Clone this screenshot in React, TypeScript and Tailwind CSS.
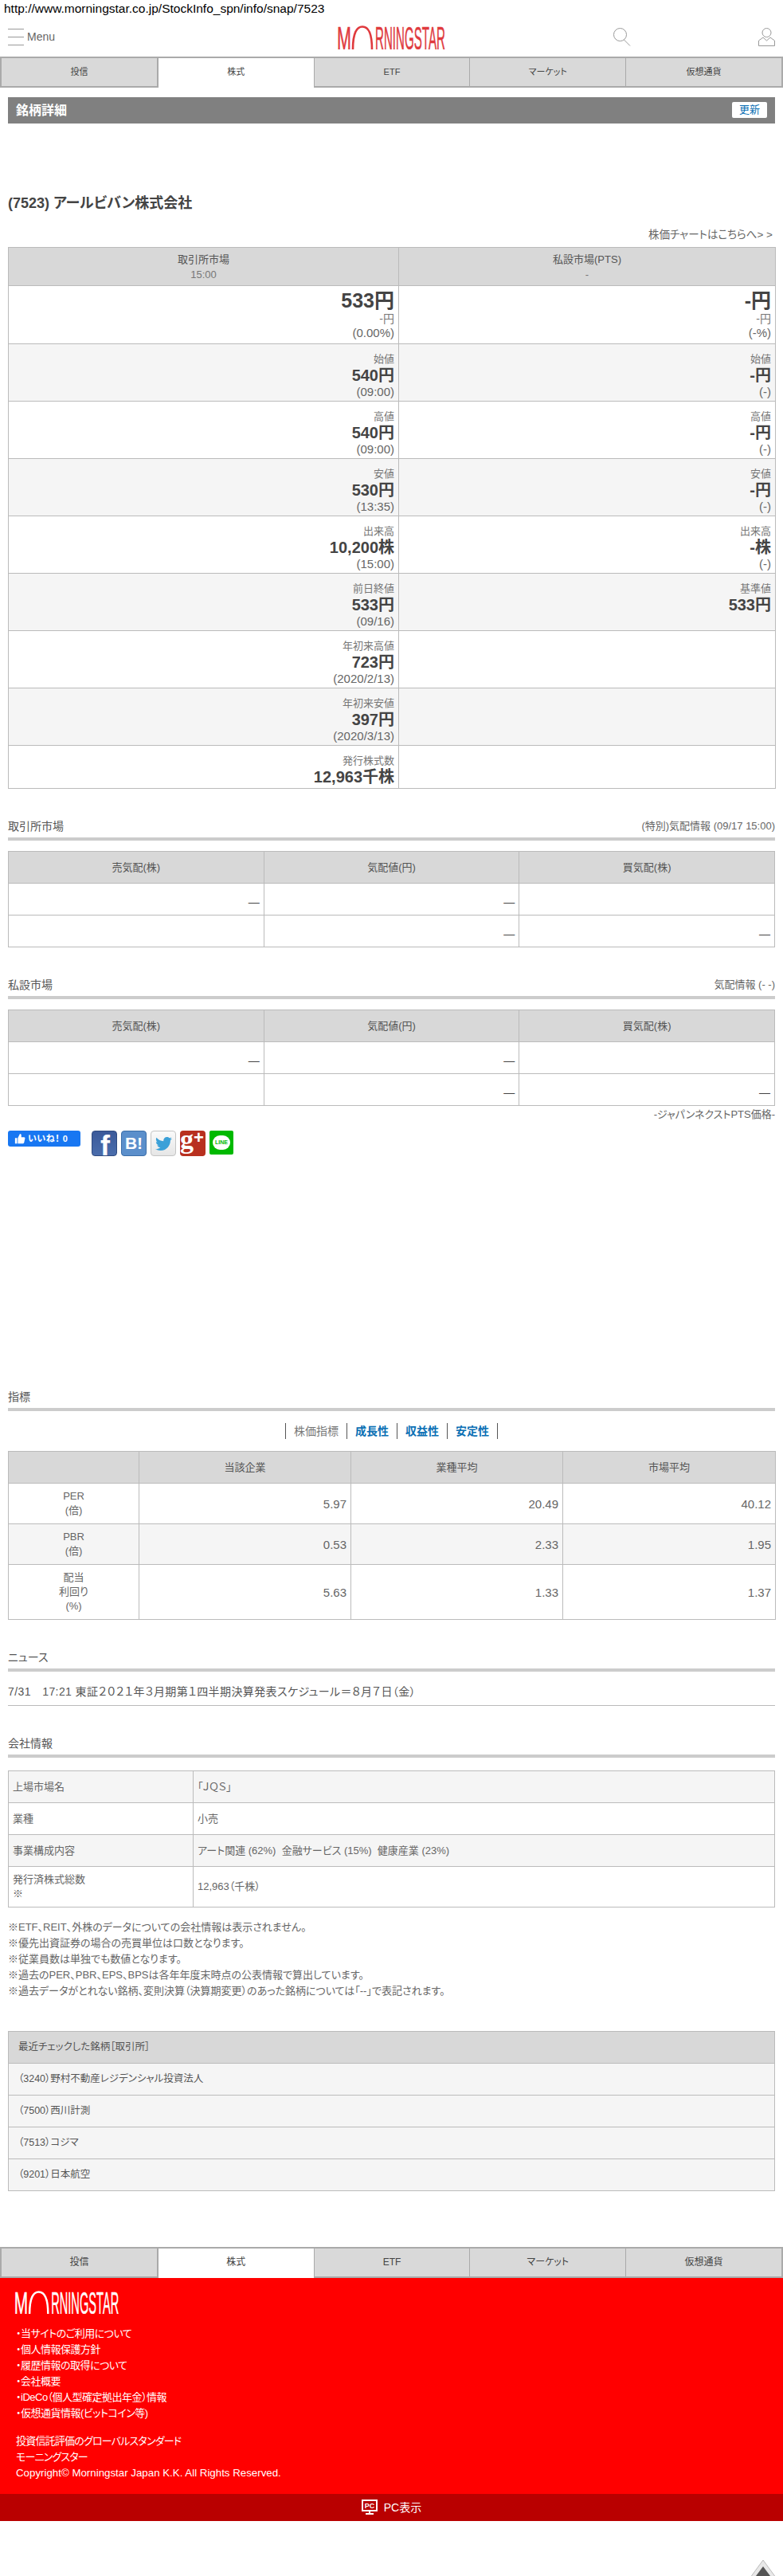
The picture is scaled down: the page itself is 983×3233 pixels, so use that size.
import { FaTwitter } from "react-icons/fa";

const tabs = ["投信", "株式", "ETF", "マーケット", "仮想通貨"];

const quoteRows = [
  { bg: "bg-[#f5f5f5]", left: ["始値", "540円", "(09:00)"], right: ["始値", "-円", "(-)"] },
  { bg: "bg-white", left: ["高値", "540円", "(09:00)"], right: ["高値", "-円", "(-)"] },
  { bg: "bg-[#f5f5f5]", left: ["安値", "530円", "(13:35)"], right: ["安値", "-円", "(-)"] },
  { bg: "bg-white", left: ["出来高", "10,200株", "(15:00)"], right: ["出来高", "-株", "(-)"] },
  { bg: "bg-[#f5f5f5]", left: ["前日終値", "533円", "(09/16)"], right: ["基準値", "533円"] },
  { bg: "bg-white", left: ["年初来高値", "723円", "(2020/2/13)"], right: [] },
  { bg: "bg-[#f5f5f5]", left: ["年初来安値", "397円", "(2020/3/13)"], right: [] },
];

const metrics = [
  { bg: "bg-white", h: "h-[51px]", label: ["PER", "(倍)"], values: ["5.97", "20.49", "40.12"] },
  { bg: "bg-[#f5f5f5]", h: "h-[51px]", label: ["PBR", "(倍)"], values: ["0.53", "2.33", "1.95"] },
  { bg: "bg-white", h: "h-[69px]", label: ["配当", "利回り", "(%)"], values: ["5.63", "1.33", "1.37"] },
];

const company = [
  { bg: "bg-[#f5f5f5]", h: "h-[40px]", label: ["上場市場名"], value: "「ＪＱＳ」" },
  { bg: "bg-white", h: "h-[40px]", label: ["業種"], value: "小売" },
  { bg: "bg-[#f5f5f5]", h: "h-[40px]", label: ["事業構成内容"], value: "アート関連 (62%)  金融サービス (15%)  健康産業 (23%)" },
  { bg: "bg-white", h: "h-[51px]", label: ["発行済株式総数", "※"], value: "12,963（千株）" },
];

const notes = [
  "※ETF、REIT、外株のデータについての会社情報は表示されません。",
  "※優先出資証券の場合の売買単位は口数となります。",
  "※従業員数は単独でも数値となります。",
  "※過去のPER、PBR、EPS、BPSは各年年度末時点の公表情報で算出しています。",
  "※過去データがとれない銘柄、変則決算（決算期変更）のあった銘柄については「--」で表記されます。",
];

const recent = ["（3240）野村不動産レジデンシャル投資法人", "（7500）西川計測", "（7513）コジマ", "（9201）日本航空"];

const footerLinks = [
  "・当サイトのご利用について",
  "・個人情報保護方針",
  "・履歴情報の取得について",
  "・会社概要",
  "・iDeCo（個人型確定拠出年金）情報",
  "・仮想通貨情報(ビットコイン等)",
];

function Logo({ color, className }: { color: string; className: string }) {
  return (
    <svg viewBox="0 0 136 30" className={className} fill={color} stroke={color} strokeWidth="0.5">
      <text x="0" y="29.5" fontSize="41" textLength="18" lengthAdjust="spacingAndGlyphs" fontFamily="Liberation Sans">
        M
      </text>
      <path d="M20 30C20 9 25 1.5 32 1.5S44 9 44 30" fill="none" stroke={color} strokeWidth="2.6" />
      <text x="48" y="29.5" fontSize="41" textLength="88" lengthAdjust="spacingAndGlyphs" fontFamily="Liberation Sans">
        RNINGSTAR
      </text>
    </svg>
  );
}

function TabBar({ textSize }: { textSize: string }) {
  return (
    <div className="flex h-[39px]">
      {tabs.map((tab, i) => (
        <div
          key={tab}
          className={`flex-1 flex justify-center pt-[8px] leading-[18px] text-[#444] border-t-2 border-[#aaa] ${textSize} ${
            i === 1
              ? "bg-white border-x border-x-[#aaa]"
              : "bg-[#d9d9d9] border-b-2 border-b-[#aaa] border-r border-r-[#aaa] first:border-l-2 last:border-r-2"
          }`}
        >
          {tab}
        </div>
      ))}
    </div>
  );
}

function SectionTitle({ title, note, className = "" }: { title: string; note?: string; className?: string }) {
  return (
    <div className={`mx-[10px] ${className}`}>
      <div className="flex justify-between items-center h-[20px] text-[14px] text-[#555]">
        <span>{title}</span>
        {note && <span className="text-[13px] text-[#666]">{note}</span>}
      </div>
      <div className="h-[4px] mt-[4px] bg-[#ccc]" />
    </div>
  );
}

function QuoteCell({ cell }: { cell: string[] }) {
  return (
    <td className="align-top text-right px-[5px] pt-[9px] border border-[#bbb]">
      {cell[0] && <div className="text-[13px] leading-[20px] text-[#777]">{cell[0]}</div>}
      {cell[1] && <div className="text-[20px] leading-[20px] font-bold text-[#444]">{cell[1]}</div>}
      {cell[2] && <div className="text-[15px] leading-[20px] mt-[1px] text-[#666]">{cell[2]}</div>}
    </td>
  );
}

function BoardTable() {
  const rows = [
    ["—", "—", ""],
    ["", "—", "—"],
  ];
  return (
    <table className="w-[963px] mx-[10px] table-fixed border-collapse text-[14px] text-[#444]">
      <thead>
        <tr className="h-[40px] bg-[#d8d8d8]">
          {["売気配(株)", "気配値(円)", "買気配(株)"].map((h) => (
            <th key={h} className="font-normal text-[13px] text-[#555] border border-[#bbb]">
              {h}
            </th>
          ))}
        </tr>
      </thead>
      <tbody>
        {rows.map((row, i) => (
          <tr key={i} className="h-[40px]">
            {row.map((c, j) => (
              <td key={j} className="text-right px-[5px] pt-[7px] border border-[#bbb]">
                {c}
              </td>
            ))}
          </tr>
        ))}
      </tbody>
    </table>
  );
}

function SocialIcons() {
  return (
    <div className="flex items-start mt-[10px] mx-[10px]">
      <div className="flex items-center gap-[3px] w-[91px] h-[20px] pl-[8px] rounded-[3px] bg-[#1877f2] text-white text-[11px] font-bold">
        <svg viewBox="0 0 16 16" className="w-[14px] h-[14px]" fill="white">
          <path d="M1 7h3v8H1zM5 7l3-6c1.500 0 2 1 2 2v3h4c1 0 1.500 1 1.300 1.800l-1.300 6c-.2.800-.7 1.200-1.500 1.200H5z" />
        </svg>
        <span className="tracking-[0.5px]">いいね！ 0</span>
      </div>
      <div className="flex gap-[5px] ml-[14px]">
        <div className="relative w-[32px] h-[32px] rounded-[4px] overflow-hidden border border-[#2f4a80] bg-gradient-to-b from-[#3b5a9a] to-[#4a6dac]">
          <span className="absolute left-[10px] top-[1px] text-white font-bold text-[36px] leading-[36px] [font-family:'Liberation_Sans']">
            f
          </span>
        </div>
        <div className="flex items-center justify-center w-[32px] h-[32px] rounded-[4px] border border-[#3b6ea8] bg-[#5b8fcb] text-white font-bold text-[21px] [font-family:'Liberation_Sans']">
          B!
        </div>
        <div className="flex items-center justify-center w-[32px] h-[32px] rounded-[4px] border border-[#c4c4c4] bg-gradient-to-b from-[#fafafa] to-[#e6e6e6]">
          <FaTwitter className="w-[21px] h-[21px] text-[#3aa0d8]" />
        </div>
        <div className="relative w-[32px] h-[32px] rounded-[4px] overflow-hidden bg-[#b8301f] text-white">
          <span className="absolute left-[0px] top-[-6px] text-[34px] leading-[34px] font-bold [font-family:'Liberation_Serif']">
            g
          </span>
          <span className="absolute left-[17px] top-[-3px] text-[22px] leading-[24px] font-bold [font-family:'Liberation_Sans']">
            +
          </span>
        </div>
        <div className="flex items-center justify-center w-[30px] h-[30px] rounded-[2px] bg-[#00b900]">
          <div className="flex items-center justify-center w-[22px] h-[18px] rounded-[10px] bg-white text-[#00b900] text-[7px] font-bold [font-family:'Liberation_Sans']">
            LINE
          </div>
        </div>
      </div>
    </div>
  );
}

export default function App() {
  return (
    <div className="w-[983px] h-[3233px] overflow-hidden bg-white text-[#555] [font-family:'Liberation_Sans','Noto_Sans_CJK_JP',sans-serif] [font-feature-settings:'palt']">
      <div className="h-[22px] pl-[5px] text-[15.5px] leading-[22px] text-black">
        http://www.morningstar.co.jp/StockInfo_spn/info/snap/7523
      </div>

      {/* header */}
      <div className="relative flex items-center justify-between h-[49px] px-[10px]">
        <div className="flex items-center gap-[4px]">
          <div className="flex flex-col gap-[9px] w-[20px]">
            <span className="h-px bg-[#999]" />
            <span className="h-px bg-[#999]" />
            <span className="h-px bg-[#999]" />
          </div>
          <span className="text-[14px] text-[#666]">Menu</span>
        </div>
        <Logo color="#e03a3e" className="absolute left-[423px] top-[10px] w-[136px] h-[30px]" />
        <div className="flex items-center gap-[160px]">
          <svg viewBox="0 0 22 23" className="w-[22px] h-[23px]" fill="none" stroke="#999" strokeWidth="1">
            <circle cx="8.500" cy="8.500" r="8" />
            <path d="M13.500 15L21 22.500" />
          </svg>
          <svg viewBox="0 0 21 23" className="w-[21px] h-[23px]" fill="none" stroke="#999" strokeWidth="1">
            <circle cx="10.500" cy="6" r="5.500" />
            <path d="M.5 22.500V16L6 12l4.500 4L15 12l5.500 4v6.500z" />
          </svg>
        </div>
      </div>

      <TabBar textSize="text-[11px]" />

      <div className="flex items-center justify-between h-[33px] mx-[10px] mt-[12px] pl-[10px] pr-[10px] bg-[#808080]">
        <span className="text-[16px] font-bold text-white">銘柄詳細</span>
        <span className="flex items-center justify-center w-[44px] h-[20px] rounded-[2px] bg-white text-[13px] text-[#0a6fb4] -mt-[1px]">
          更新
        </span>
      </div>

      <h1 className="mx-[10px] mt-[85px] text-[18px] leading-[30px] font-bold text-[#444]">(7523) アールビバン株式会社</h1>
      <div className="mt-[15px] mr-[13px] text-right text-[13.5px] leading-[20px] text-[#666]">株価チャートはこちらへ&gt; &gt;</div>

      <table className="w-[963px] mx-[10px] mt-[5px] table-fixed border-collapse">
        <colgroup>
          <col className="w-[490px]" />
          <col className="w-[473px]" />
        </colgroup>
        <thead>
          <tr className="h-[48px] bg-[#d8d8d8]">
            <th className="font-normal text-[13px] leading-[19px] text-[#555] border border-[#bbb]">
              取引所市場
              <div className="text-[#777]">15:00</div>
            </th>
            <th className="font-normal text-[13px] leading-[19px] text-[#555] border border-[#bbb]">
              私設市場(PTS)
              <div className="text-[#777]">-</div>
            </th>
          </tr>
        </thead>
        <tbody>
          <tr className="h-[73px]">
            {[
              ["533円", "-円", "(0.00%)"],
              ["-円", "-円", "(-%)"],
            ].map((c) => (
              <td key={c[2]} className="align-top text-right px-[5px] pt-[5px] border border-[#bbb]">
                <div className="text-[25px] leading-[27px] font-bold text-[#444]">{c[0]}</div>
                <div className="text-[14px] leading-[18px] text-[#777]">{c[1]}</div>
                <div className="text-[15px] leading-[18px] text-[#666]">{c[2]}</div>
              </td>
            ))}
          </tr>
          {quoteRows.map((row) => (
            <tr key={row.left[0]} className={`h-[72px] ${row.bg}`}>
              <QuoteCell cell={row.left} />
              <QuoteCell cell={row.right} />
            </tr>
          ))}
          <tr className="h-[54px]">
            <QuoteCell cell={["発行株式数", "12,963千株"]} />
            <QuoteCell cell={[]} />
          </tr>
        </tbody>
      </table>

      <SectionTitle title="取引所市場" note="(特別)気配情報 (09/17 15:00)" className="mt-[37px]" />
      <div className="mt-[13px]">
        <BoardTable />
      </div>

      <SectionTitle title="私設市場" note="気配情報 (- -)" className="mt-[37px]" />
      <div className="mt-[13px]">
        <BoardTable />
      </div>
      <div className="mt-[1px] mr-[10px] text-right text-[13px] leading-[20px] text-[#666]">-ジャパンネクストPTS価格-</div>

      <SocialIcons />

      <SectionTitle title="指標" className="mt-[292px]" />
      <div className="flex justify-center mt-[15px] h-[20px] text-[14px] leading-[20px]">
        <span className="px-[10px] border-l border-[#555] text-[#777]">株価指標</span>
        {["成長性", "収益性", "安定性"].map((t, i) => (
          <span key={t} className={`px-[10px] border-l border-[#555] font-bold text-[#0a6fb4] ${i === 2 ? "border-r" : ""}`}>
            {t}
          </span>
        ))}
      </div>

      <table className="w-[963px] mx-[10px] mt-[15px] table-fixed border-collapse text-[#666]">
        <colgroup>
          <col className="w-[164px]" />
          <col className="w-[266px]" />
          <col className="w-[266px]" />
          <col className="w-[267px]" />
        </colgroup>
        <thead>
          <tr className="h-[40px] bg-[#d8d8d8]">
            {["", "当該企業", "業種平均", "市場平均"].map((h) => (
              <th key={h} className="font-normal text-[13px] text-[#555] border border-[#bbb]">
                {h}
              </th>
            ))}
          </tr>
        </thead>
        <tbody>
          {metrics.map((m) => (
            <tr key={m.label[0]} className={`${m.h} ${m.bg}`}>
              <td className="text-center text-[13px] leading-[18px] border border-[#bbb]">
                {m.label.map((l) => (
                  <div key={l}>{l}</div>
                ))}
              </td>
              {m.values.map((v, i) => (
                <td key={i} className="text-right text-[15px] px-[5px] pt-[3px] border border-[#bbb]">
                  {v}
                </td>
              ))}
            </tr>
          ))}
        </tbody>
      </table>

      <SectionTitle title="ニュース" className="mt-[37px]" />
      <div className="mx-[10px] mt-[15px] pb-[7px] border-b border-[#bbb] text-[14px] leading-[20px] tracking-[0.4px] text-[#555]">
        7/31　17:21 東証２０２１年３月期第１四半期決算発表スケジュール＝８月７日（金）
      </div>

      <SectionTitle title="会社情報" className="mt-[37px]" />
      <table className="w-[963px] mx-[10px] mt-[16px] table-fixed border-collapse text-[13px] text-[#666]">
        <colgroup>
          <col className="w-[232px]" />
          <col />
        </colgroup>
        <tbody>
          {company.map((c) => (
            <tr key={c.label[0]} className={`${c.h} ${c.bg}`}>
              <td className="px-[5px] leading-[18px] border border-[#bbb]">
                {c.label.map((l) => (
                  <div key={l}>{l}</div>
                ))}
              </td>
              <td className="px-[5px] whitespace-pre border border-[#bbb]">{c.value}</td>
            </tr>
          ))}
        </tbody>
      </table>

      <div className="mx-[10px] mt-[15px] text-[13px] leading-[20px] text-[#666]">
        {notes.map((n) => (
          <div key={n}>{n}</div>
        ))}
      </div>

      <table className="w-[963px] mx-[10px] mt-[40px] border-collapse text-[12.5px] text-[#555]">
        <tbody>
          <tr className="h-[40px] bg-[#d8d8d8]">
            <td className="px-[12px] border border-[#bbb]">最近チェックした銘柄［取引所］</td>
          </tr>
          {recent.map((r) => (
            <tr key={r} className="h-[40px] bg-[#f5f5f5]">
              <td className="px-[12px] border border-[#bbb]">{r}</td>
            </tr>
          ))}
        </tbody>
      </table>

      <div className="mt-[70px]">
        <TabBar textSize="text-[12px]" />
      </div>

      {/* footer */}
      <div className="h-[271px] pt-[16px] pl-[15px] bg-[#ff0000] text-white text-[13px] leading-[20px]">
        <Logo color="white" className="w-[137px] h-[29px]" />
        <div className="mt-[15px] pl-[5px] tracking-[-0.5px]">
          {footerLinks.map((l) => (
            <div key={l}>{l}</div>
          ))}
        </div>
        <div className="mt-[15px] pl-[5px]">
          <div className="tracking-[-0.8px]">投資信託評価のグローバルスタンダード</div>
          <div className="tracking-[-0.8px]">モーニングスター</div>
          <div className="text-[13.3px]">Copyright© Morningstar Japan K.K. All Rights Reserved.</div>
        </div>
      </div>
      <div className="flex items-center justify-center gap-[8px] h-[34px] bg-[#b90000] text-white text-[14px]">
        <svg viewBox="0 0 20 20" className="w-[20px] h-[20px]">
          <path d="M0 0h20v15H11v2h4v2H5v-2h4v-2H0z" fill="white" />
          <rect x="2" y="2" width="16" height="11" fill="#b90000" />
          <text x="10" y="11" fontSize="9" fontWeight="bold" textAnchor="middle" fill="white" fontFamily="Liberation Sans">
            PC
          </text>
        </svg>
        <span>PC表示</span>
      </div>

      {/* back to top */}
      <div className="flex justify-end h-[70px] pt-[49px] pr-[6px]">
        <svg viewBox="0 0 38 21" className="w-[38px] h-[21px] shrink-0">
          <path d="M19 0L38 26H0z" fill="#e8e8e8" stroke="#bbb" />
          <path d="M19 8L31 24H7z" fill="#555" />
        </svg>
      </div>
    </div>
  );
}
